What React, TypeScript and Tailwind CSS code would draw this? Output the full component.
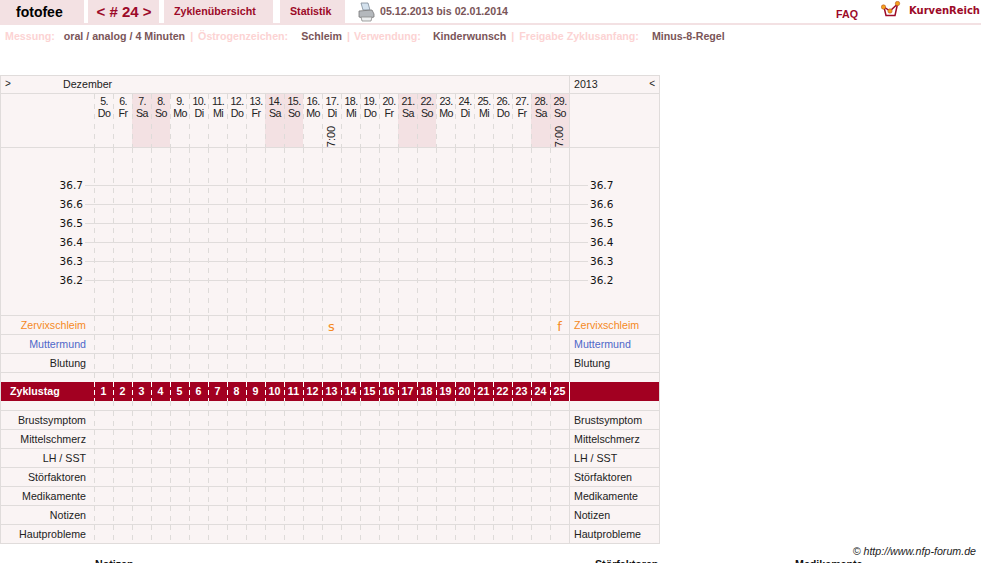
const wd = ["Do", "Fr", "Sa", "So", "Mo", "Di", "Mi"];
const days = Array.from({ length: 25 }, (_, i) => ({
  date: i + 5,
  name: wd[i % 7],
  cycle: i + 1,
  weekend: i % 7 === 2 || i % 7 === 3,
  time: i === 12 || i === 24,
}));
const temps = ["36.7", "36.6", "36.5", "36.4", "36.3", "36.2"];
const dash = "bg-[repeating-linear-gradient(to_bottom,#dedbd9_0,#dedbd9_5px,transparent_5px,transparent_10px)] bg-no-repeat bg-left bg-[length:1px_100%]";

function Cols({ mark }: { mark?: Record<number, string> }) {
  return (
    <>
      {days.map((d, i) => (
        <div key={d.date} className={`flex items-center justify-center ${dash}`}>
          {mark?.[i] && <span className="pt-[2px] font-['DejaVu_Sans',sans-serif] text-[13px] text-[#f58a1f]">{mark[i]}</span>}
        </div>
      ))}
    </>
  );
}

function Row({ label, color, mark }: { label: string; color?: string; mark?: Record<number, string> }) {
  return (
    <div className="grid h-[19px] grid-cols-[93px_repeat(25,19px)_1fr] border-b border-[#e0dcdb]">
      <div className={`flex items-center justify-end pr-2 ${color ?? "text-[#222]"}`}>{label}</div>
      <Cols mark={mark} />
      <div className={`flex items-center border-l border-[#e0dcdb] pl-1 ${color ?? "text-[#222]"}`}>{label}</div>
    </div>
  );
}

function Spacer({ h }: { h: string }) {
  return (
    <div className={`grid grid-cols-[93px_repeat(25,19px)_1fr] ${h}`}>
      <div />
      <Cols />
      <div className="border-l border-[#e0dcdb]" />
    </div>
  );
}

function Printer() {
  return (
    <svg width="17" height="20" viewBox="0 0 17 20">
      <path d="M3 1 L10 1 L12 8 L5 8 Z" fill="#d4e2ee" stroke="#7f8c98" strokeWidth="0.8" />
      <path d="M1 9 L14 8 L16 12 L16 15 Q8 18 1 15 Z" fill="#b4b8bc" stroke="#777" strokeWidth="0.8" />
      <path d="M3 15 L14 15 L13 19 L4 19 Z" fill="#eceeef" stroke="#8a8a8a" strokeWidth="0.8" />
    </svg>
  );
}

function Logo() {
  return (
    <svg width="20" height="18" viewBox="0 0 20 18">
      <path d="M3 6 L5 14.5 L14 14.5 L16.5 3" fill="none" stroke="#9c0a28" strokeWidth="1.5" />
      <path d="M3 6 L9 10 L16.5 3" fill="none" stroke="#9c0a28" strokeWidth="1.5" />
      <circle cx="2.5" cy="6" r="2.2" fill="#f5a11c" stroke="#a8431c" strokeWidth="0.5" />
      <circle cx="9" cy="10" r="2.2" fill="#f5a11c" stroke="#a8431c" strokeWidth="0.5" />
      <circle cx="16.5" cy="2.5" r="2.2" fill="#f5a11c" stroke="#a8431c" strokeWidth="0.5" />
    </svg>
  );
}

export default function App() {
  return (
    <div className="relative h-[563px] w-[981px] overflow-hidden bg-white font-['Liberation_Sans',Arial,sans-serif] text-[10.67px] leading-none">
      <header className="flex h-[25px] items-stretch border-b-2 border-[#f3e1e3]">
        <div className="flex w-[84px] items-center bg-[#f3e1e3] pl-4 text-[14px] font-bold text-black">fotofee</div>
        <div className="ml-1 flex w-[71px] items-center justify-center bg-[#f3e1e3] pl-px text-[15px] font-bold text-[#9c0a28]">&lt; # 24 &gt;</div>
        <div className="ml-[5px] flex w-[109px] items-center bg-[#f3e1e3] pl-[10px] font-bold text-[#9c0a28]">Zyklenübersicht</div>
        <div className="ml-[7px] flex w-[65px] items-center bg-[#f3e1e3] pl-[10px] font-bold text-[#9c0a28]">Statistik</div>
        <div className="ml-[13px] flex items-center"><Printer /></div>
        <div className="ml-[5px] flex items-center font-bold text-[#7a5558]">05.12.2013 bis 02.01.2014</div>
        <div className="ml-auto flex items-start">
          <span className="mt-[9px] font-bold text-[#9c0a28]">FAQ</span>
          <span className="mt-px ml-[23px]"><Logo /></span>
          <span className="mt-[6px] ml-[8px] mr-px font-['DejaVu_Sans',sans-serif] text-[10px] font-bold text-[#9c0a28]">KurvenReich</span>
        </div>
      </header>

      <div className="flex h-[22px] items-center pl-[5px] font-bold whitespace-pre">
        <span className="text-[#fcd3d3]">Messung:</span>
        <span className="ml-[9px] text-[#7a5558]">oral / analog / 4 Minuten</span>
        <span className="mx-[5px] text-[#fcd3d3]">|</span>
        <span className="text-[#fcd3d3]">Östrogenzeichen:</span>
        <span className="ml-[13px] text-[#7a5558]">Schleim</span>
        <span className="mr-[4px] ml-[5px] text-[#fcd3d3]">|</span>
        <span className="text-[#fcd3d3]">Verwendung:</span>
        <span className="ml-[12px] text-[#7a5558]">Kinderwunsch</span>
        <span className="mx-[5px] text-[#fcd3d3]">|</span>
        <span className="text-[#fcd3d3]">Freigabe Zyklusanfang:</span>
        <span className="ml-[13px] text-[#7a5558]">Minus-8-Regel</span>
      </div>

      <div className="mt-[28px] w-[660px] border-x border-t border-[#e0dcdb] bg-[#faf4f4] text-[#222]">
        <div className="grid h-[18px] grid-cols-[568px_1fr] border-b border-[#e0dcdb]">
          <div className="relative flex items-center pl-[62px]">
            <span className="absolute top-[3px] left-[4px] text-[10px]">&gt;</span>
            Dezember
          </div>
          <div className="relative flex items-center border-l border-[#e0dcdb] pl-1">
            2013
            <span className="absolute top-[3px] right-[4px] text-[10px]">&lt;</span>
          </div>
        </div>

        <div className="grid h-[54px] grid-cols-[93px_repeat(25,19px)_1fr] border-b border-[#e0dcdb]">
          <div />
          {days.map((d) => (
            <div key={d.date} className={`flex flex-col items-center pt-[2px] pl-px text-[10.67px] tracking-[-0.6px] ${d.weekend ? "bg-[#f3e1e3]" : ""} ${dash}`}>
              <span>{d.date}.</span>
              <span className="mt-px">{d.name}</span>
              {d.time && <span className="mt-[13px] -rotate-90 text-[11px] tracking-normal">7:00</span>}
            </div>
          ))}
          <div className="border-l border-[#e0dcdb]" />
        </div>

        <div className="relative grid h-[168px] grid-cols-[93px_repeat(25,19px)_1fr] border-b border-[#e0dcdb]">
          <div />
          <Cols />
          <div className="border-l border-[#e0dcdb]" />
          <div className="absolute top-[28px] left-0 w-full">
            {temps.map((t) => (
              <div key={t} className="flex h-[19px] items-center">
                <span className="w-[82px] text-right font-['DejaVu_Sans',sans-serif] text-[10.5px] text-[#111]">{t}</span>
                <div className="ml-[2px] h-px w-[503px] bg-[#e0dcdb]" />
                <span className="ml-[2px] font-['DejaVu_Sans',sans-serif] text-[10.5px] text-[#111]">{t}</span>
              </div>
            ))}
          </div>
        </div>

        <Row label="Zervixschleim" color="text-[#f58a1f]" mark={{ 12: "s", 24: "f" }} />
        <Row label="Muttermund" color="text-[#4f68c9]" />
        <Row label="Blutung" />
        <Spacer h="h-[9px]" />

        <div className="grid h-[19px] grid-cols-[93px_repeat(25,19px)_1fr] bg-[#a20021] font-bold text-white">
          <div className="flex items-center pl-[9px]">Zyklustag</div>
          {days.map((d) => (
            <div key={d.cycle} className="flex items-center justify-center bg-[repeating-linear-gradient(to_bottom,#fff_0,#fff_5px,transparent_5px,transparent_8px)] bg-[length:1px_100%] bg-left bg-no-repeat">
              {d.cycle}
            </div>
          ))}
          <div className="border-l border-white" />
        </div>

        <div className="border-b border-[#e0dcdb]"><Spacer h="h-[9px]" /></div>
        <Row label="Brustsymptom" />
        <Row label="Mittelschmerz" />
        <Row label="LH / SST" />
        <Row label="Störfaktoren" />
        <Row label="Medikamente" />
        <Row label="Notizen" />
        <Row label="Hautprobleme" />
      </div>

      <div className="absolute top-[546px] right-[5px] italic text-[#222]">© http://www.nfp-forum.de</div>
      <div className="absolute top-[559px] left-[95px] font-bold text-[#111]">Notizen</div>
      <div className="absolute top-[559px] left-[595px] font-bold text-[#111]">Störfaktoren</div>
      <div className="absolute top-[559px] left-[795px] font-bold text-[#111]">Medikamente</div>
    </div>
  );
}
